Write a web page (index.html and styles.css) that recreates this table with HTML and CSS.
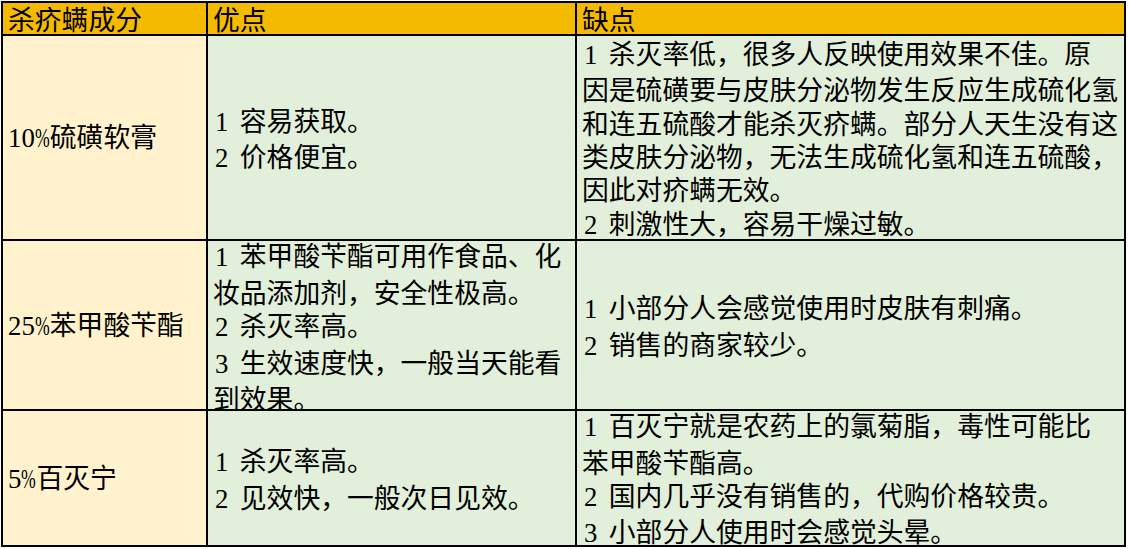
FILE: index.html
```html
<!DOCTYPE html>
<html lang="zh-CN">
<head>
<meta charset="utf-8">
<title>杀疥螨成分对比</title>
<link rel="stylesheet" href="styles.css">
</head>
<body>
<div class="sheet">
  <div class="cell head">杀疥螨成分</div>
  <div class="cell head">优点</div>
  <div class="cell head">缺点</div>

  <div class="cell name"><div><span class="lat">10<span class="pct">%</span></span>硫磺软膏</div></div>
  <div class="cell body"><div><span class="num">1</span>容易获取。<br><span class="num">2</span>价格便宜。</div></div>
  <div class="cell body"><div><span class="num">1</span>杀灭率低，很多人反映使用效果不佳。原<br>因是硫磺要与皮肤分泌物发生反应生成硫化氢<br>和连五硫酸才能杀灭疥螨。部分人天生没有这<br>类皮肤分泌物，无法生成硫化氢和连五硫酸，<br>因此对疥螨无效。<br><span class="num">2</span>刺激性大，容易干燥过敏。</div></div>

  <div class="cell name"><div><span class="lat">25<span class="pct">%</span></span>苯甲酸苄酯</div></div>
  <div class="cell body"><div><span class="num">1</span>苯甲酸苄酯可用作食品、化<br>妆品添加剂，安全性极高。<br><span class="num">2</span>杀灭率高。<br><span class="num">3</span>生效速度快，一般当天能看<br>到效果。</div></div>
  <div class="cell body"><div><span class="num">1</span>小部分人会感觉使用时皮肤有刺痛。<br><span class="num">2</span>销售的商家较少。</div></div>

  <div class="cell name"><div><span class="lat">5<span class="pct">%</span></span>百灭宁</div></div>
  <div class="cell body"><div><span class="num">1</span>杀灭率高。<br><span class="num">2</span>见效快，一般次日见效。</div></div>
  <div class="cell body"><div><span class="num">1</span>百灭宁就是农药上的氯菊脂，毒性可能比<br>苯甲酸苄酯高。<br><span class="num">2</span>国内几乎没有销售的，代购价格较贵。<br><span class="num">3</span>小部分人使用时会感觉头晕。</div></div>
</div>
</body>
</html>
```

FILE: styles.css
```css
html, body {
  margin: 0;
  padding: 0;
  background: #ffffff;
}

body {
  padding: 1px 0 0 1px;
  font-family: "Noto Sans CJK SC", sans-serif;
  font-size: 26.8px;
  color: #000000;
}

.sheet {
  display: grid;
  grid-template-columns: 205px 369px 549px;
  grid-template-rows: 33px 205px 170px 136px;
  width: max-content;
  border-left: 2px solid #000;
  border-top: 2px solid #000;
}

.cell {
  box-sizing: border-box;
  border-right: 2px solid #000;
  border-bottom: 2px solid #000;
  display: flex;
  align-items: center;
  padding-left: 5px;
  white-space: nowrap;
  line-height: 33.4px;
}

.head {
  background: #f4ba00;
  line-height: 31px;
}

.name {
  background: #fff2cc;
}

.body {
  background: #e2efda;
  padding-top: 3px;
}

.lat {
  font-family: "Liberation Serif", serif;
}

.pct {
  display: inline-block;
  width: 0.56em;
  transform: scaleX(0.66);
  transform-origin: left center;
}

.num {
  display: inline-block;
  width: 1em;
  font-family: "Liberation Serif", serif;
  padding-left: 2px;
  box-sizing: border-box;
}
```
